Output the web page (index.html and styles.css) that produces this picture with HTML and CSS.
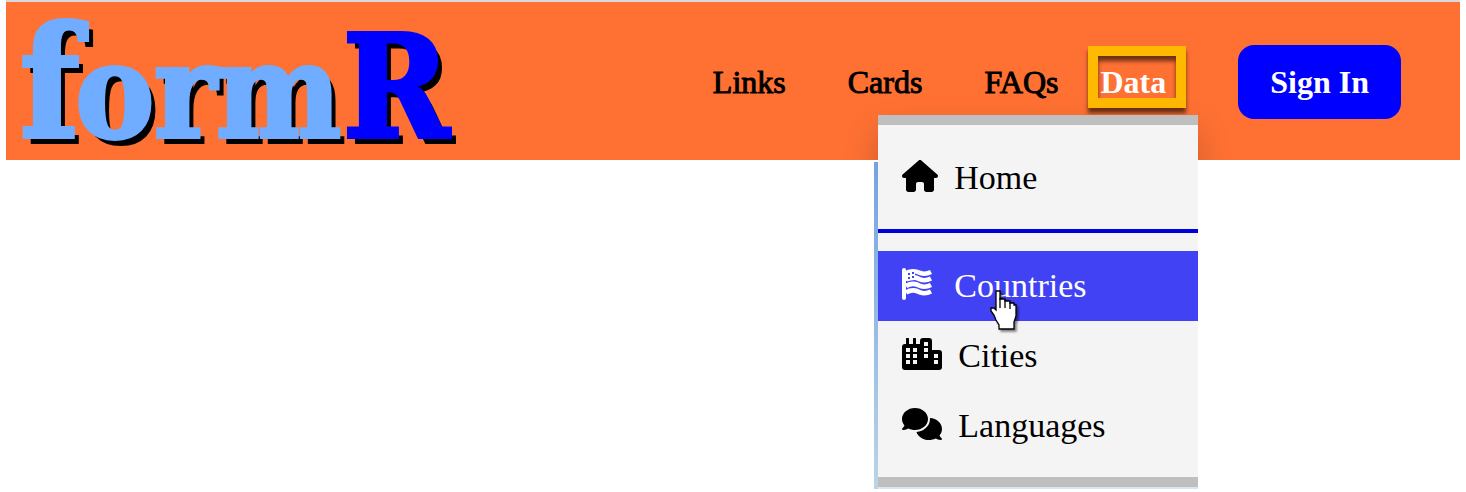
FILE: index.html
```html
<!DOCTYPE html>
<html lang="en">
<head>
<meta charset="utf-8">
<title>formR</title>
<link rel="stylesheet" href="styles.css">
</head>
<body>
<header class="header">
  <a class="logo" href="#"><span class="logo-f">f</span><span class="logo-orm">orm</span><span class="logo-r">R</span></a>
  <nav class="nav">
    <a class="nav-link" href="#">Links</a>
    <a class="nav-link" href="#">Cards</a>
    <a class="nav-link" href="#">FAQs</a>
    <div class="nav-data">
      <button class="data-button" type="button">Data</button>
      <div class="menu">
        <a class="menu-item" href="#">
          <svg class="icon" viewBox="0 0 576 512" width="36" height="32"><path fill="currentColor" d="M575.8 255.5c0 18-15 32.1-32 32.1h-32l.7 160.2c0 2.7-.2 5.4-.5 8.1V472c0 22.1-17.9 40-40 40H456c-1.1 0-2.2 0-3.3-.1c-1.4 .1-2.8 .1-4.2 .1H416 392c-22.1 0-40-17.9-40-40V448 384c0-17.7-14.3-32-32-32H256c-17.7 0-32 14.3-32 32v64 24c0 22.1-17.9 40-40 40H160 128.1c-1.5 0-3-.1-4.5-.2c-1.2 .1-2.4 .2-3.6 .2H104c-22.1 0-40-17.9-40-40V360c0-.9 0-1.9 .1-2.8V287.6H32c-18 0-32-14-32-32.1c0-9 3-17 10-24L266.4 8c7-7 15-8 22-8s15 2 21 7L564.8 231.5c8 7 12 15 11 24z"/></svg>
          Home
        </a>
        <hr class="menu-rule">
        <a class="menu-item menu-item-active" href="#">
          <svg class="icon" viewBox="0 0 36 32" width="36" height="32"><g fill="none" stroke="currentColor"><path stroke-width="4" stroke-linecap="round" d="M2 2v28"/><g stroke-width="4.600"><path d="M4 5C10 2 14 3 18 4.800S25 6 29 4"/><path d="M4 11.500C10 8 14 9.500 18 11.300S25 12.500 29 10.500"/><path d="M4 18C10 14.500 14 16 18 17.800S25 19 29 17"/><path d="M4 24.500C10 21 14 22.500 18 24.300S25 25.500 29 23.500"/></g></g><path fill="currentColor" d="M4 3l9-1v10l-9 1z"/><g fill="#4242f5"><path d="M6 5h2v2H6zM10 4h2v2h-2zM6 9h2v2H6zM10 8h2v2h-2z"/></g></svg>
          Countries
        </a>
        <a class="menu-item" href="#">
          <svg class="icon" viewBox="0 0 40 32" width="40" height="32"><path fill="currentColor" fill-rule="evenodd" d="M4 1a1 1 0 0 1 3 0V6h4V1a1 1 0 0 1 3 0V6h4V3a3 3 0 0 1 3-3h6a3 3 0 0 1 3 3v9h7a3 3 0 0 1 3 3v14a3 3 0 0 1-3 3H3a3 3 0 0 1-3-3V9a3 3 0 0 1 3-3h1zM4 10v4h4v-4zM11 10v4h4v-4zM4 16v4h4v-4zM11 16v4h4v-4zM4 22v4h4v-4zM11 22v4h4v-4zM22 4v4h4v-4zM22 10v4h4v-4zM22 16v4h4v-4zM32 16v4h4v-4zM32 22v4h4v-4z"/></svg>
          Cities
        </a>
        <a class="menu-item" href="#">
          <svg class="icon" viewBox="0 0 640 512" width="40" height="32"><path fill="currentColor" d="M208 352c114.900 0 208-78.800 208-176S322.900 0 208 0S0 78.800 0 176c0 38.600 14.700 74.300 39.600 103.400c-3.500 9.400-8.700 17.700-14.200 24.700c-4.800 6.200-9.700 11-13.300 14.300c-1.800 1.600-3.300 2.900-4.300 3.700c-.5 .4-.9 .7-1.100 .8l-.2 .2C1 327.200-1.400 334.400 .8 340.900S9.100 352 16 352c21.800 0 43.800-5.600 62.100-12.500c9.200-3.500 17.800-7.400 25.200-11.400C134.100 343.300 169.800 352 208 352zM448 176c0 112.300-99.100 196.900-216.500 207C255.800 457.400 336.400 512 432 512c38.200 0 73.900-8.700 104.700-23.900c7.500 4 16 7.900 25.200 11.400c18.300 6.900 40.300 12.500 62.100 12.500c6.900 0 13.100-4.500 15.200-11.100c2.100-6.600-.2-13.800-5.800-17.900l-.2-.2c-.2-.2-.6-.4-1.100-.8c-1-.8-2.500-2-4.300-3.700c-3.600-3.300-8.500-8.100-13.300-14.300c-5.500-7-10.700-15.400-14.200-24.700c24.900-29 39.600-64.700 39.600-103.400c0-92.800-84.900-168.900-192.600-175.500c.4 5.100 .6 10.300 .6 15.500z"/></svg>
          Languages
        </a>
        <svg class="cursor" viewBox="0 0 29 41" width="29" height="41"><path fill="#fff" stroke="#000" stroke-width="1.300" d="M7 1h4v8h5v2h5v2h4v2h2v11l-2 6v7H10v-4l-3-5-2-5-3-4v-3h3l2 2z"/><path fill="none" stroke="#000" stroke-width="1.300" d="M11 8v10M16 10v8M21 12v7"/></svg>
      </div>
    </div>
    <button class="sign-in" type="button">Sign In</button>
  </nav>
</header>
</body>
</html>
```

FILE: styles.css
```css
* {
  box-sizing: border-box;
}

body {
  min-height: 100vh;
  margin: 0 6px;
  background: #fff;
  color: #000;
  font-family: "Liberation Serif", serif;
  font-size: 32px;
  line-height: 32px;
}

a {
  color: inherit;
  text-decoration: none;
}

button {
  font: inherit;
  font-weight: bold;
  color: #fff;
  cursor: pointer;
}

.header {
  display: flex;
  justify-content: space-between;
  align-items: center;
  padding: 0 59px 0 14px;
  border-top: 2px solid #d9d9d9;
  background: #ff7133;
}

.logo {
  display: flex;
  align-items: baseline;
  padding: 4px 0 0;
  color: #70acff;
  font-family: "DejaVu Serif Condensed", "DejaVu Serif", serif;
  font-weight: bold;
  font-stretch: condensed;
  line-height: 1;
  white-space: nowrap;
  text-shadow: 6px 7px 0 #000;
  -webkit-text-stroke: 4px currentColor;
}

.logo-f {
  margin-right: -4px;
  font-size: 154px;
}

.logo-orm {
  font-size: 131px;
}

.logo-r {
  margin-left: 2px;
  color: #00f;
  font-size: 142px;
}

.nav {
  display: flex;
  align-items: baseline;
  padding-top: 2px;
}

.nav-link {
  margin-right: 62px;
  -webkit-text-stroke: 1px currentColor;
}

.nav-link:nth-child(3) {
  margin-right: 29px;
}

.nav-data {
  position: relative;
  margin-right: 52px;
}

.data-button {
  padding: 10px 10px 0 3px;
  border: 10px solid #ffb900;
  background: transparent;
  box-shadow: 0 5px 4px #6b2f15, inset 0 5px 4px #6b2f15;
}

.sign-in {
  padding: 21px 32px;
  border: 0;
  border-radius: 16px;
  background: #00f;
}

.menu {
  position: absolute;
  top: calc(100% + 7px);
  right: -12px;
  z-index: 1;
  width: 320px;
  padding: 18px 0 16px;
  border-top: 10px solid #bfbfbf;
  border-bottom: 10px solid #bfbfbf;
  background: #f4f4f4;
  font-size: 34px;
  box-shadow: 0 2px 0 #dce5ec;
}

.menu::before {
  content: "";
  position: absolute;
  inset: -10px 0;
  z-index: -1;
  box-shadow: 0 16px 32px rgba(0, 0, 0, 0.2);
  clip-path: inset(-40px -40px calc(100% - 45px) -40px);
}

.menu::after {
  content: "";
  position: absolute;
  top: 37px;
  bottom: -12px;
  left: -4px;
  width: 4px;
  background: linear-gradient(#75a2e2, #b9d5e5);
}

.menu-item {
  display: flex;
  align-items: center;
  gap: 16px;
  height: 70px;
  padding: 0 24px;
}

.menu-item-active {
  background: #4242f5;
  color: #fff;
}

.menu-rule {
  height: 4px;
  margin: 16px 0 18px;
  border: 0;
  background: #0000dc;
}

.icon {
  flex: none;
  margin-bottom: 4px;
}

.cursor {
  position: absolute;
  top: 165px;
  left: 111px;
  filter: drop-shadow(2px 2px 1px rgba(0, 0, 0, 0.5));
}
```
